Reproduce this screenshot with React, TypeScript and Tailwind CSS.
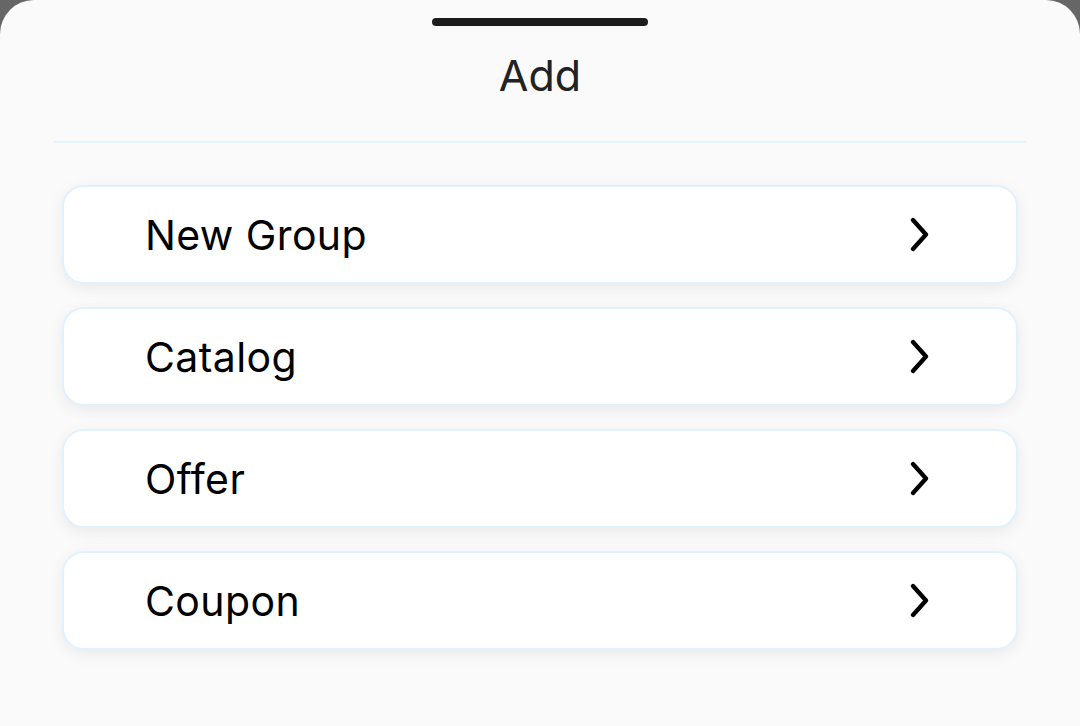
import React from "react";

const items = ["New Group", "Catalog", "Offer", "Coupon"];

function Chevron() {
  return (
    <svg width="24" height="36" viewBox="0 0 24 36" fill="none" className="shrink-0">
      <polyline points="5,3 18,17.5 5,32" stroke="#000" strokeWidth="4.3" strokeLinecap="round" strokeLinejoin="round" />
    </svg>
  );
}

export default function App() {
  return (
    <div className="w-[1080px] h-[726px] bg-[#666666] overflow-hidden">
      <div className="w-full h-full bg-[#fafafa] rounded-t-[34px] flex flex-col items-center" style={{ fontFamily: "Inter, 'Liberation Sans', sans-serif" }}>
        <div className="mt-[18px] w-[216px] h-[8px] rounded-full bg-[#1c1c1c]" />
        <div className="mt-[17px] text-[43px] leading-[64px] text-[#222222]">Add</div>
        <div className="mt-[34px] w-[972px] h-[2px] bg-[#e6f4fd]" />
        <div className="mt-[42px] w-[956px] flex flex-col gap-[23px]">
          {items.map((t) => (
            <div
              key={t}
              className="h-[99px] rounded-[22px] bg-white border-2 border-[#e1f2fd] shadow-[0_4px_16px_rgba(0,0,0,0.07)] flex items-center pl-[81px] pr-[84px] justify-between"
            >
              <span className="text-[41px] text-black mt-[2px] tracking-[0.4px]">
                {t}
              </span>
              <Chevron />
            </div>
          ))}
        </div>
      </div>
    </div>
  );
}
